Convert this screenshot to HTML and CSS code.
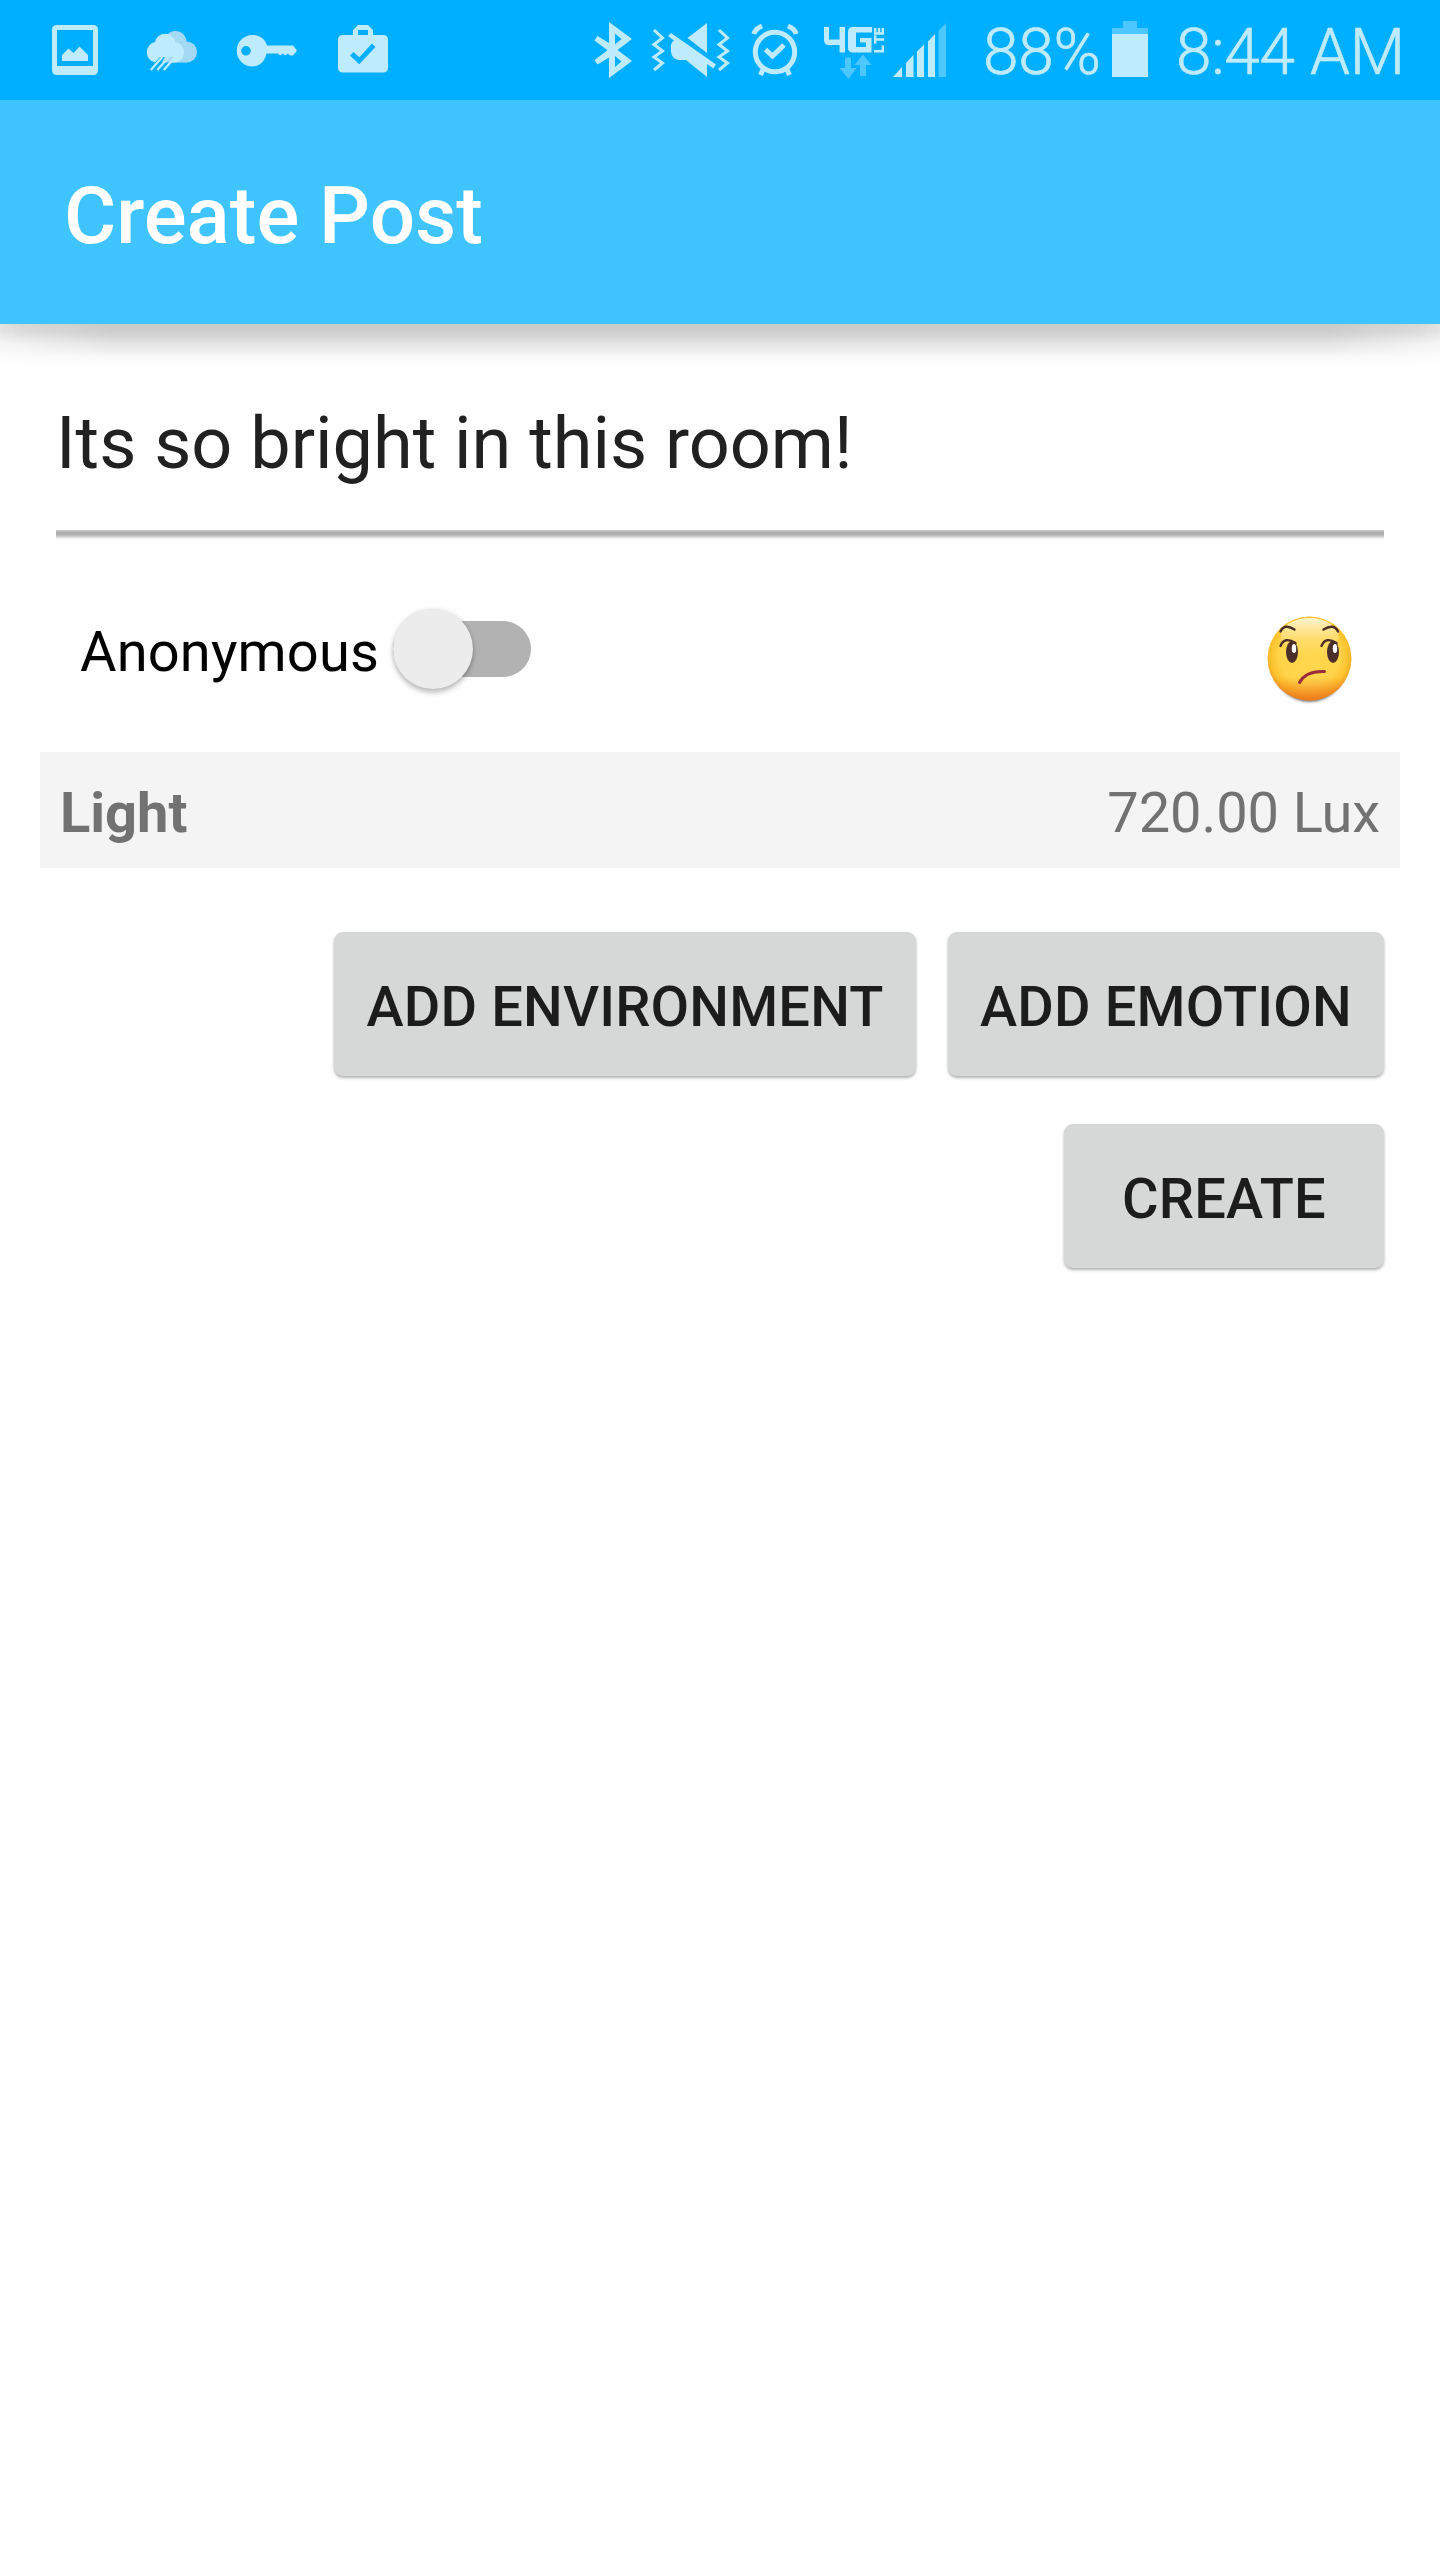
FILE: index.html
```html
<!DOCTYPE html>
<html lang="en">
<head>
<meta charset="utf-8">
<title>Create Post</title>
<link rel="stylesheet" href="styles.css">
</head>
<body>
<header class="status">
  <svg class="status-icons" width="350" height="100" viewBox="0 0 350 100" aria-hidden="true">
    <path class="ink" fill-rule="evenodd" d="M57 25h36q5 0 5 5v40q0 5-5 5H57q-5 0-5-5V30q0-5 5-5zm0 5v36h36V30z"/>
    <path class="ink" d="M62 61v-6l6.500-6.500 5 4.500 6-6.500 8.500 8.500v6z"/>
    <g class="cloud-back"><circle cx="175.500" cy="42" r="11"/><circle cx="186.500" cy="52" r="10.500"/><path d="M170 45h17v17.500h-25z"/></g>
    <path class="ink" d="M155 62.500a10.500 10.500 0 0 1 0-20.500a10.500 10.500 0 0 1 20.500 0a10.500 10.500 0 0 1 .500 20.500h-6.500l3.800-5.500H160l-5 5.500z"/>
    <path class="rain" d="M150.800 70l11.500-13M157.300 70l11.500-13M163.800 70l11.500-13"/>
    <path class="ink" fill-rule="evenodd" d="M252.500 35c8 0 13 5 14.500 10.500H293l4 5-4 5h-3l-2-2-3 2-2-2-3 2-2-2h-11.500C265 61 260 66.500 252.500 66.500a15.700 15.700 0 0 1 0-31.500zm-6.500 11a4.800 4.800 0 1 0 0 9.600a4.800 4.800 0 1 0 0-9.600z"/>
  </svg>
  <svg class="status-case" width="60" height="100" viewBox="330 0 60 100" aria-hidden="true">
    <path class="ink" fill-rule="evenodd" d="M353 35v-5l5-5h10l5 5v5h10q5 0 5 5v27.500q0 5-5 5h-40q-5 0-5-5V40q0-5 5-5zm5 0h10v-5h-10zm-4.500 17l-3.500 3.500 9.300 8.800L375.500 47l-3.500-3.500-12.700 13.700z"/>
  </svg>
  <svg class="signals" width="390" height="100" viewBox="580 0 390 100" aria-hidden="true">
    <path class="ink" fill-rule="evenodd" d="M609 22l23 17-14.500 11L632 61l-23 17V57.500l-11.500 7-3-4.500 13-9.800-13-9.800 3-4.500 11.500 7zm6 11.500v11l6.500-5.500zm0 22.500v11l6.500-5.500z"/>
    <path class="zig" d="M654 30l8.500 8-8.500 6.500 8.500 6.500-8.500 6 8.500 6-8.500 7M719 30l8.500 8-8.500 6.500 8.500 6.500-8.500 6 8.500 6-8.500 7"/>
    <path class="ink" d="M707 23v30L687.500 38zM671 33l45 31.500-2.700 4L707 64v13L686 60h-8q-7-2-7-9v-5q0-4 3-5.500l-6-4.500z"/>
    <g class="clock"><circle cx="775" cy="52" r="19.700"/><path d="M765.500 49.500l7 6.500 11.500-11M754 34q1-5 8-8M796 34q-1-5-8-8M763.500 68.500l-3 6.500M786.500 68.500l3 6.500"/></g>
    <path class="ink" d="M824 27h5v12.500h10.500V27h5.500v25.500h-5.500v-7.500H829q-5 0-5-5z"/>
    <path class="ink" d="M853 27h19v5.500h-16v14.500h10v-4.500h-6V38h11.500v14.500H853q-5 0-5-5V32q0-5 5-5z"/>
    <path class="lte" d="M874 51.300h8.800V45.500M875.200 35.300v8.500M875 39.500h9M875.200 28v5.500h7.600V28M879 33v-5"/>
    <path class="dim" d="M845 57.500h6V68h5.500L848.500 79l-9-11h5.500zM860 76V65h-5.500l8.500-10.500L871.500 65H866v11z"/>
    <path class="ink" d="M893 77l9-10v10zM906 77V63l7.500-8v22zM917 77V51.500l7-7V77zM928 77V41.500l7-7.500v43z"/>
    <path class="dim" d="M938.500 77V31l7.500-8v54z"/>
  </svg>
  <span class="percent">88%</span>
  <svg class="battery" width="36" height="100" viewBox="0 0 36 100" aria-hidden="true">
    <path class="dim" d="M11 21h14v7h11v6H0v-6h11z"/><path class="ink" d="M0 34h36v43H0z"/>
  </svg>
  <span class="time">8:44 AM</span>
</header>
<div class="appbar"><h1>Create Post</h1></div>
<main>
  <div class="message">Its so bright in this room!</div>
  <div class="options">
    <span class="anon">Anonymous</span>
    <span class="switch"><span class="thumb"></span></span>
    <svg class="mood" width="92" height="96" viewBox="0 0 92 96" role="img" aria-label="Confused face">
      <defs>
        <radialGradient id="face" cx="50%" cy="46%" r="55%"><stop offset="0" stop-color="#ffd64f"/><stop offset=".65" stop-color="#ffd44a"/><stop offset=".85" stop-color="#fcc12d"/><stop offset="1" stop-color="#ef9b25"/></radialGradient>
        <linearGradient id="glow" x1="0" y1="0" x2="0" y2="1"><stop offset="0" stop-color="#fff6d8"/><stop offset="1" stop-color="#ffdc67" stop-opacity="0"/></linearGradient>
        <linearGradient id="warm" x1="0" y1="0" x2="0" y2="1"><stop offset=".72" stop-color="#f07a1d" stop-opacity="0"/><stop offset="1" stop-color="#ee731c" stop-opacity=".85"/></linearGradient>
      </defs>
      <ellipse class="mood-shadow" cx="45.500" cy="52" rx="38" ry="40.500"/>
      <circle cx="45.500" cy="49.500" r="42" fill="url(#face)"/>
      <circle cx="45.500" cy="49.500" r="42" fill="url(#warm)"/>
      <ellipse cx="45.500" cy="28" rx="29" ry="19" fill="url(#glow)"/>
      <g class="eye"><ellipse cx="28" cy="43" rx="6" ry="11"/><ellipse cx="69" cy="43" rx="6" ry="11"/></g>
      <g class="brow"><path d="M16.500 22.500Q20.500 14 30.500 20.500M59.500 20.500Q70 14 74 22.500M16.500 37Q20.500 27 31.500 34M57.500 37Q61.500 27 72.500 34"/></g>
      <g fill="#fff"><ellipse cx="30" cy="39.500" rx="2.200" ry="4.600"/><ellipse cx="71" cy="39.500" rx="2.200" ry="4.600"/></g>
      <path class="mouth" d="M35.500 73.500Q42 61.500 60.500 62.500"/>
    </svg>
  </div>
  <div class="reading"><b>Light</b><span>720.00 Lux</span></div>
  <div class="actions">
    <button type="button" class="environment">ADD ENVIRONMENT</button>
    <button type="button" class="emotion">ADD EMOTION</button>
    <button type="button" class="create">CREATE</button>
  </div>
</main>
</body>
</html>
```
FILE: styles.css
```css
* { box-sizing: border-box; }
body {
  margin: 0;
  min-height: 2560px;
  background: #fefefe;
  font-family: Roboto, sans-serif;
  font-size: 56px;
}
svg { display: block; flex: none; }

.status {
  display: flex;
  height: 100px;
  background: #00afff;
  color: #bfebff;
  font-size: 64px;
  font-weight: 300;
  line-height: 76px;
  -webkit-text-stroke: .6px #bfebff;
}
.status-icons { margin-right: -20px; }
.signals { margin-left: 190px; }
.status span { padding-top: 15px; white-space: nowrap; letter-spacing: -.3px; }
.percent { width: 129px; margin-left: 13px; }
.time { margin-left: 28px; }
.ink { fill: #bfebff; }
.dim { fill: #4dc7ff; }
.cloud-back { fill: #a3d9f2; }
.rain { stroke: #bfebff; stroke-width: 2.2; fill: none; }
.zig { stroke: #bfebff; stroke-width: 3; fill: none; }
.clock { stroke: #bfebff; stroke-width: 5; fill: none; }
.lte { stroke: #bfebff; stroke-width: 2.4; fill: none; }

.appbar {
  position: relative;
  height: 224px;
  padding: 69px 64px 0;
  background: #40c4ff;
  color: #fff;
}
.appbar::before,
.appbar::after {
  content: "";
  position: absolute;
  left: 0;
  right: 0;
  top: 100%;
  height: 42px;
}
/* tight contact shadow, then a longer one that fades toward the screen edges */
.appbar::before {
  background: linear-gradient(rgba(0,0,0,.1), rgba(0,0,0,.085) 7px, transparent 20px);
  mask-image: linear-gradient(90deg, rgba(0,0,0,.7), #000 20px, #000 1420px, rgba(0,0,0,.7));
}
.appbar::after {
  background: linear-gradient(rgba(0,0,0,.115), rgba(0,0,0,.115) 12px, rgba(0,0,0,.09) 22px, rgba(0,0,0,.02) 33px, transparent);
  mask-image: linear-gradient(90deg, rgba(0,0,0,.35), #000 110px, #000 1330px, rgba(0,0,0,.35));
}
.appbar h1 { margin: 0; font-size: 80px; font-weight: 500; line-height: 94px; }

main { padding: 0 40px; }
.message {
  height: 215px;
  margin: 0 16px;
  padding-top: 77px;
  color: #212121;
  font-size: 72px;
  line-height: 86px;
  background: linear-gradient(#d0d0d0, #b0b0b0 2px, #adadad 4px, #c4c4c4 6px, #ececec 8px, #f4f4f4) bottom / 100% 9px no-repeat;
}
.options {
  display: flex;
  align-items: flex-start;
  height: 213px;
  padding: 70px 44px 0 40px;
  color: #000;
}
.anon { width: 313px; padding-top: 10px; line-height: 66px; letter-spacing: .15px; }
.switch {
  width: 138px;
  height: 56px;
  margin-top: 12px;
  border-radius: 28px;
  background: #b2b2b2;
}
.thumb {
  display: block;
  width: 80px;
  height: 80px;
  margin-top: -12px;
  border-radius: 50%;
  background: #ececec;
  box-shadow: 0 4px 5px rgba(0,0,0,.22), 0 0 4px rgba(0,0,0,.12);
}
.mood { margin-left: auto; }
.mood-shadow { fill: #555; filter: blur(1.5px); }
.eye { fill: #4b2f28; }
.brow { stroke: #4b2f28; stroke-width: 2.4; fill: none; stroke-linecap: round; }
.mouth { stroke: #9c2c3b; stroke-width: 3; fill: none; stroke-linecap: round; }

.reading {
  display: flex;
  justify-content: space-between;
  height: 116px;
  padding: 28px 20px 0;
  background: #f4f4f4;
  color: #727272;
  line-height: 66px;
}
.reading span { letter-spacing: -.1px; }
.actions {
  display: flex;
  flex-wrap: wrap;
  justify-content: flex-end;
  gap: 48px 32px;
  padding: 64px 16px 0;
}
button {
  height: 144px;
  padding: 6px 0 0;
  border: 0;
  border-radius: 9px;
  background: #d6d8d7;
  color: #1c1c1c;
  font: 500 56px/66px Roboto, sans-serif;
  letter-spacing: .15px;
  white-space: nowrap;
  box-shadow: 0 2px 3px rgba(0,0,0,.3);
}
.environment { width: 582px; }
.emotion { width: 436px; }
.create { width: 320px; }
```
